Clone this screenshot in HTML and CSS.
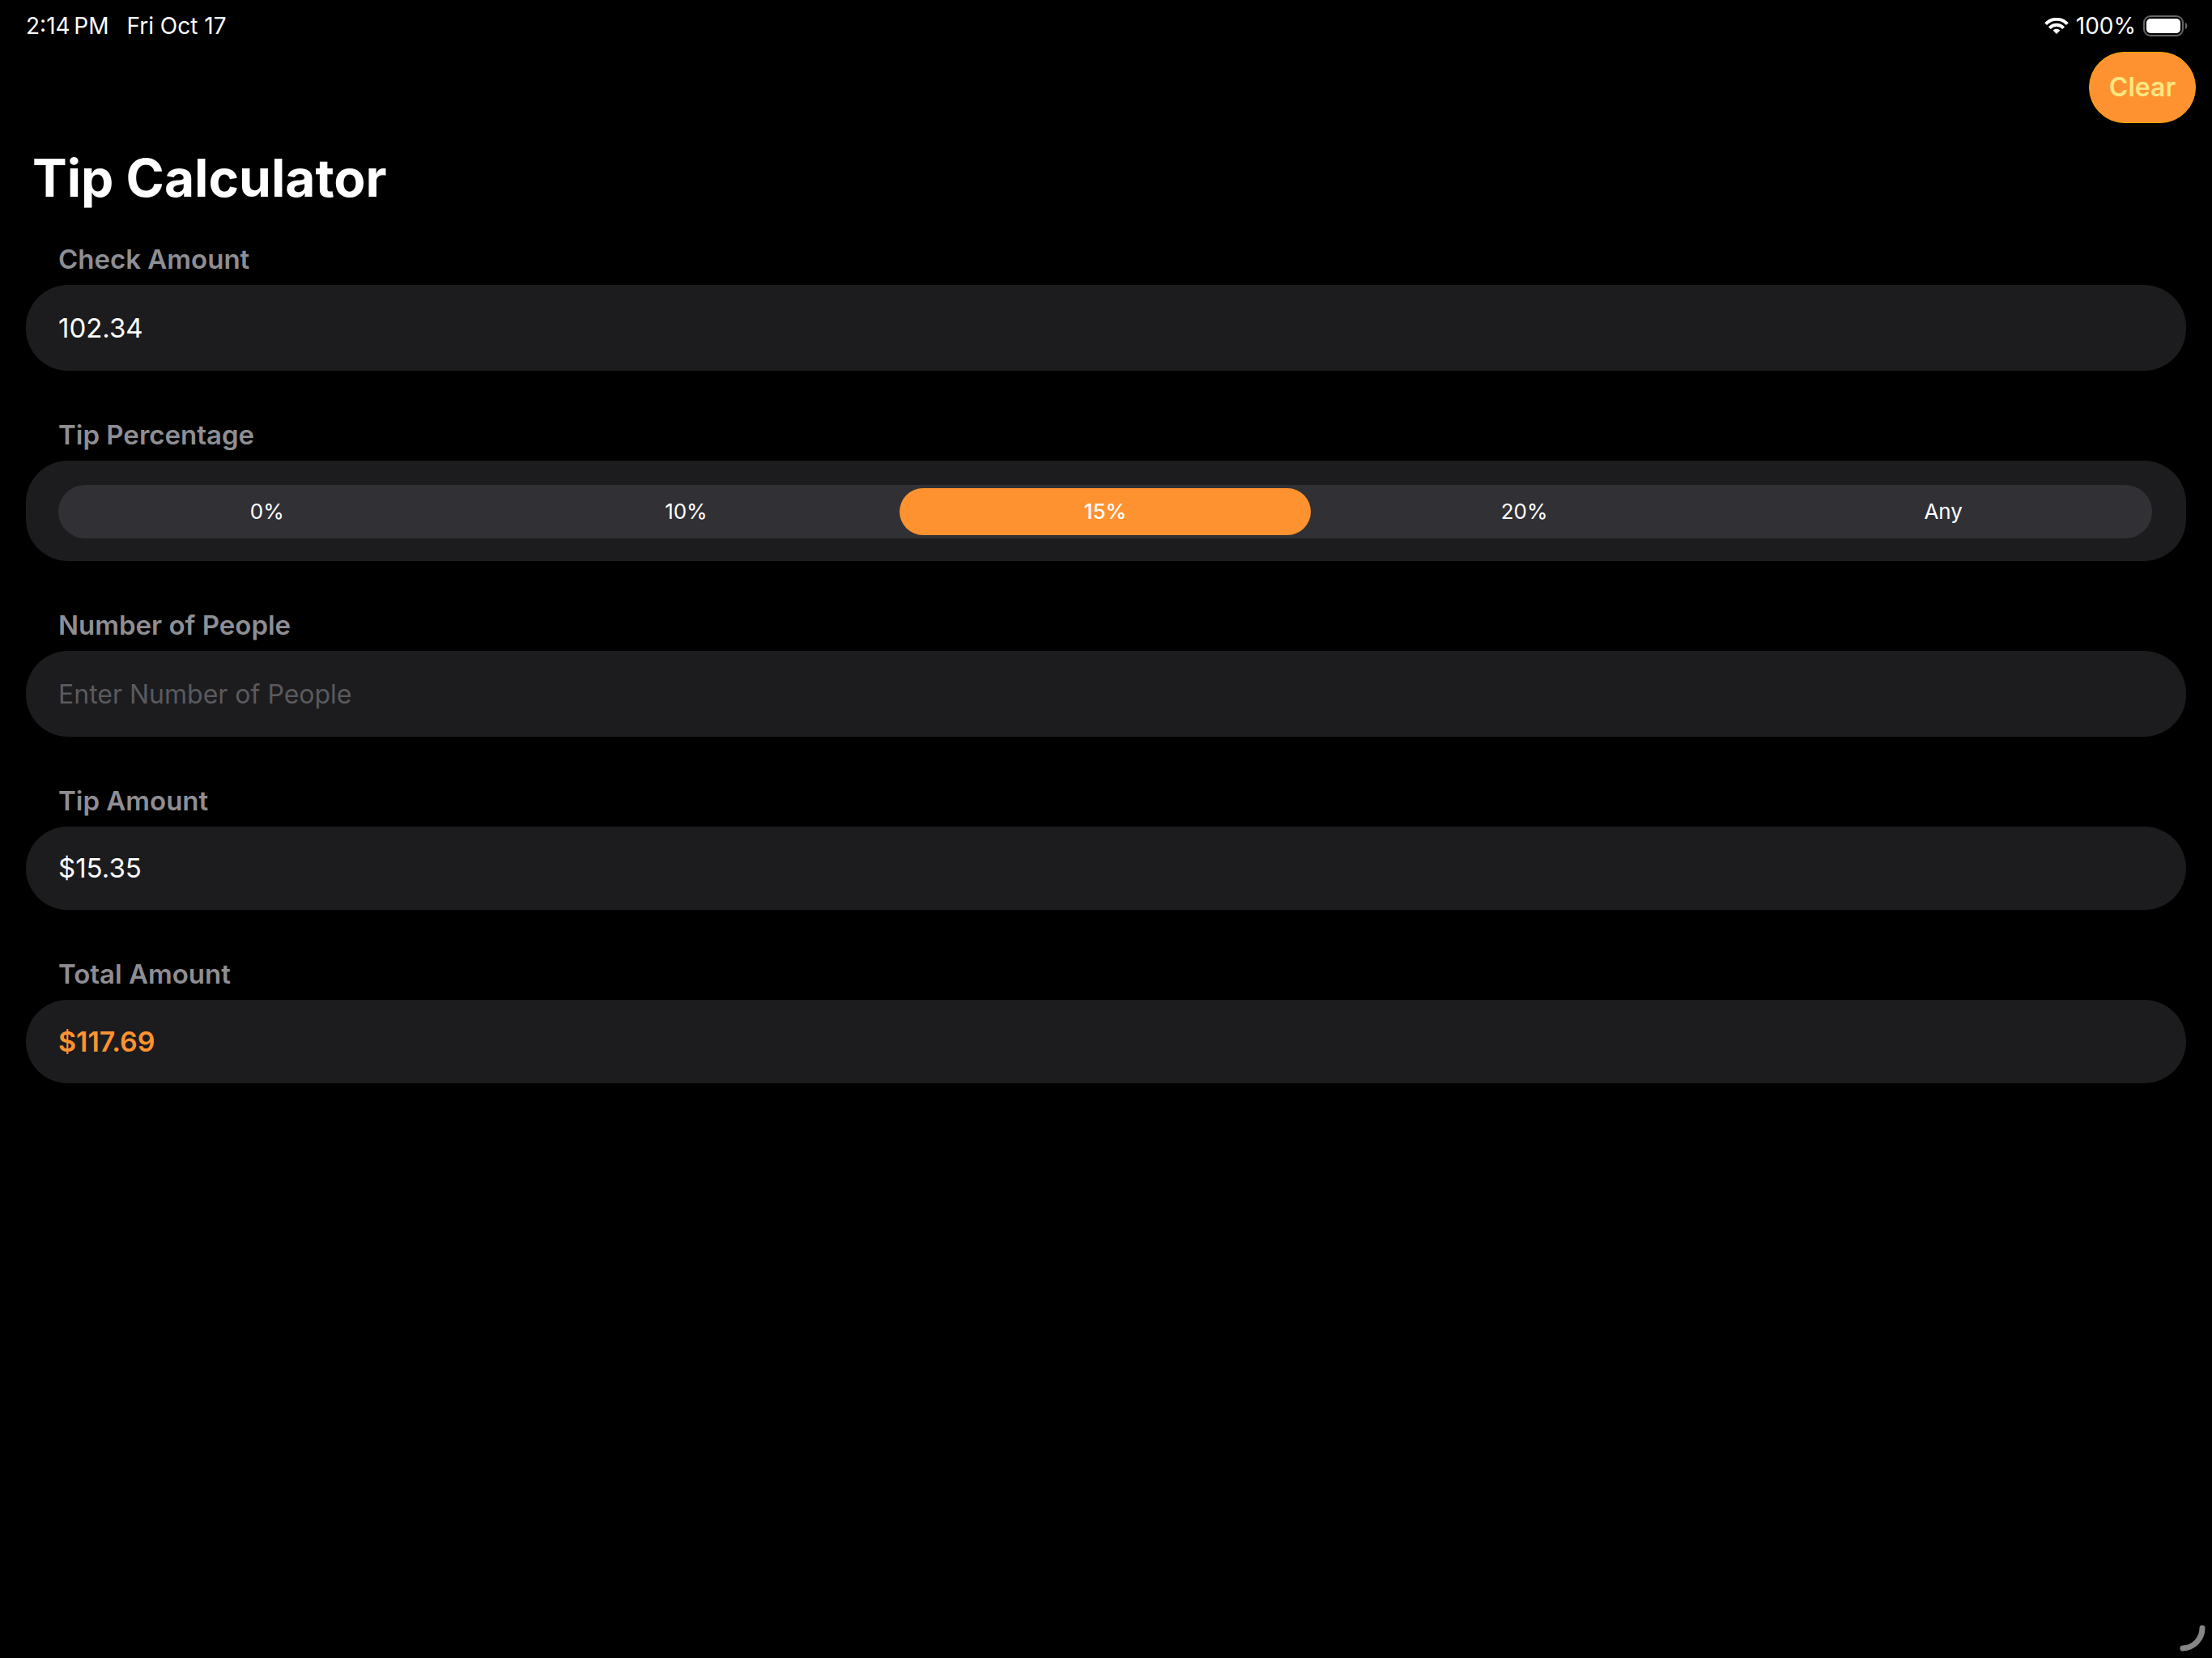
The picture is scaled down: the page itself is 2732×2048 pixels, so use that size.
FILE: index.html
```html
<!DOCTYPE html>
<html lang="en">
<head>
<meta charset="utf-8">
<meta name="viewport" content="width=device-width, initial-scale=1">
<title>Tip Calculator</title>
<link rel="stylesheet" href="styles.css">
</head>
<body>
<div class="status-bar">
  <div class="status-left"><span>2:14&#8198;PM</span><span>Fri Oct 17</span></div>
  <div class="status-right">
    <svg class="wifi" viewBox="0 0 30 20" aria-hidden="true">
      <path fill="none" stroke="#fff" stroke-width="4" d="M1.6 7.6C9-.2 21-.2 28.4 7.6"/>
      <path fill="none" stroke="#fff" stroke-width="4" d="M6.4 12.6C11.2 7.6 18.8 7.6 23.6 12.6"/>
      <path fill="#fff" d="M15 20l-4.400-4.400c2.400-2.400 6.400-2.400 8.800 0z"/>
    </svg>
    <span>100%</span>
    <svg class="battery" viewBox="0 0 55 26" aria-hidden="true">
      <rect x="1" y="1" width="48" height="24" rx="8" fill="none" stroke="#666" stroke-width="2"/>
      <rect x="4" y="4" width="42" height="18" rx="5" fill="#fff"/>
      <path fill="#666" d="M52 9c3.200 1 3.200 7 0 8z"/>
    </svg>
  </div>
</div>
<form class="calculator">
  <div class="toolbar"><button class="clear" type="reset">Clear</button></div>
  <h1 class="title">Tip Calculator</h1>
  <section class="group">
    <label class="group-label" for="check">Check Amount</label>
    <input class="card field" id="check" type="text" inputmode="decimal" value="102.34">
  </section>
  <section class="group" role="radiogroup" aria-labelledby="tip-label">
    <h2 class="group-label" id="tip-label">Tip Percentage</h2>
    <div class="card picker">
      <div class="segments">
        <label class="segment"><input type="radio" name="tip">0%</label>
        <label class="segment"><input type="radio" name="tip">10%</label>
        <label class="segment"><input type="radio" name="tip" checked>15%</label>
        <label class="segment"><input type="radio" name="tip">20%</label>
        <label class="segment"><input type="radio" name="tip">Any</label>
      </div>
    </div>
  </section>
  <section class="group">
    <label class="group-label" for="people">Number of People</label>
    <input class="card field" id="people" type="text" inputmode="numeric" placeholder="Enter Number of People">
  </section>
  <section class="group">
    <label class="group-label" for="tip-amount">Tip Amount</label>
    <output class="card result" id="tip-amount">$15.35</output>
  </section>
  <section class="group">
    <label class="group-label" for="total">Total Amount</label>
    <output class="card result total" id="total">$117.69</output>
  </section>
</form>
<svg class="corner" viewBox="0 0 40 40" aria-hidden="true">
  <path fill="none" stroke="#868686" stroke-width="7" stroke-linecap="round" d="M28 4A25 25 0 0 1 4 29"/>
</svg>
</body>
</html>
```
FILE: styles.css
```css
* { box-sizing: border-box; }

body {
  margin: 0;
  min-height: 100vh;
  background: #000;
  color: #fff;
  font-family: Inter, "Liberation Sans", sans-serif;
  font-size: 33px;
}

.status-bar {
  display: flex;
  justify-content: space-between;
  height: 64px;
  padding: 0 30px 0 32px;
  font-size: 28px;
  line-height: 64px;
  font-weight: 400;
}
.status-left { display: flex; gap: 22px; }
.status-right { display: flex; align-items: center; gap: 9px; }
.wifi { width: 30px; height: 20px; }
.battery { width: 55px; height: 26px; }

.toolbar {
  display: flex;
  justify-content: flex-end;
  padding-right: 20px;
}
.clear {
  width: 132px;
  height: 88px;
  padding: 0;
  border: 1px solid #ffa800;
  border-radius: 44px;
  background: #ff9230;
  color: #ffe680;
  font: 600 32px/40px Inter, "Liberation Sans", sans-serif;
}

.title {
  margin: 0;
  padding: 28px 40px 0;
  font-size: 64px;
  line-height: 80px;
  font-weight: 700;
}

.group { padding: 0 32px; margin-bottom: 31px; }
.title + .group { margin-top: 12px; }
.group-label {
  display: block;
  margin: 0;
  padding: 28px 40px 12px;
  font-size: 33px;
  line-height: 40px;
  font-weight: 600;
  color: #8e8e93;
}

.card {
  display: block;
  width: 100%;
  padding: 0 40px;
  border: 0;
  border-radius: 52px;
  background: #1c1c1e;
  color: #fff;
  font: 400 33px/39px Inter, "Liberation Sans", sans-serif;
}
.field { height: 106px; outline: 0; }
.field::placeholder { color: #5a5a5e; opacity: 1; font-size: 32px; }
.result { padding: 32px 40px; }
.total { color: #ff9230; font-size: 34px; font-weight: 600; }
.picker { padding: 30px 42px 28px 40px; }

.segments {
  display: grid;
  grid-template-columns: repeat(5, 1fr);
  gap: 10px;
  padding: 4px;
  border-radius: 33px;
  background: #313135;
}
.segment {
  border-radius: 29px;
  font-size: 26px;
  line-height: 58px;
  font-weight: 400;
  text-align: center;
}
.segment input {
  position: absolute;
  opacity: 0;
  margin: 0;
}
.segment:has(:checked) { background: #ff9230; font-weight: 500; }

.corner {
  position: fixed;
  right: 0;
  bottom: 1px;
  width: 40px;
  height: 40px;
}
```
